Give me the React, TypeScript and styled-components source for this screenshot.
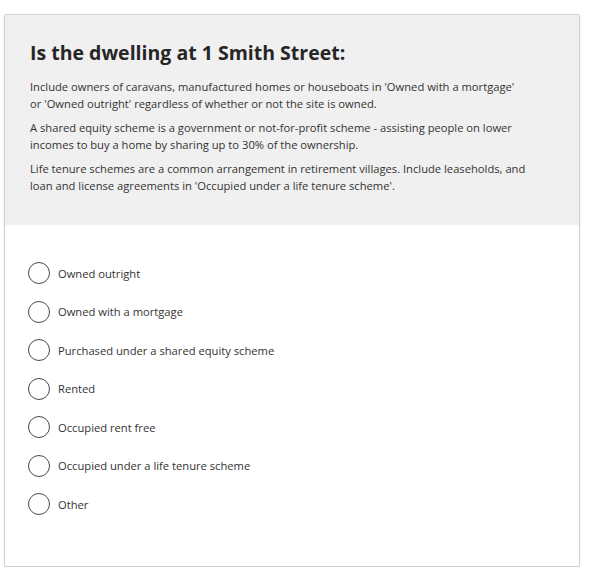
import React from "react";
import styled, { createGlobalStyle } from "styled-components";

const GlobalStyle = createGlobalStyle`
  html, body {
    margin: 0;
    padding: 0;
    background: #ffffff;
  }
  body {
    font-family: "Open Sans", "Noto Sans", sans-serif;
    color: #333333;
  }
`;

const Page = styled.div`
  padding: 14px 0 0 4px;
`;

const Card = styled.div`
  width: 574px;
  height: 551px;
  border: 1px solid #d0d0d0;
  border-radius: 2px;
  box-shadow: 0 1px 2px rgba(0, 0, 0, 0.08);
  background: #ffffff;
  overflow: hidden;
`;

const Header = styled.div`
  background: #f0f0f0;
  height: 210px;
  box-sizing: border-box;
  padding: 24px 53px 0 25px;
`;

const Title = styled.h1`
  margin: 0 0 11px;
  font-size: 19.5px;
  line-height: 28px;
  font-weight: 700;
  color: #262626;
`;

const Hint = styled.p`
  margin: 0 0 6.2px;
  font-size: 11.2px;
  line-height: 17.3px;
  color: #333333;
`;

const Options = styled.div`
  display: flex;
  flex-direction: column;
  padding: 29px 0 0 23px;
`;

const Option = styled.label`
  display: flex;
  align-items: center;
  height: 38.5px;
  gap: 8px;
  cursor: pointer;
`;

const Circle = styled.span`
  width: 20px;
  height: 20px;
  border: 1.5px solid #4a4a4a;
  border-radius: 50%;
  flex-shrink: 0;
`;

const Label = styled.span`
  font-size: 11.2px;
  color: #333333;
`;

const options = [
  "Owned outright",
  "Owned with a mortgage",
  "Purchased under a shared equity scheme",
  "Rented",
  "Occupied rent free",
  "Occupied under a life tenure scheme",
  "Other",
];

const App: React.FC = () => {
  return (
    <>
      <GlobalStyle />
      <Page>
        <Card>
          <Header>
            <Title>Is the dwelling at 1 Smith Street:</Title>
            <Hint>
              Include owners of caravans, manufactured homes or houseboats in
              'Owned with a mortgage' or 'Owned outright' regardless of whether
              or not the site is owned.
            </Hint>
            <Hint>
              A shared equity scheme is a government or not-for-profit scheme -
              assisting people on lower incomes to buy a home by sharing up to
              30% of the ownership.
            </Hint>
            <Hint>
              Life tenure schemes are a common arrangement in retirement
              villages. Include leaseholds, and loan and license agreements in
              'Occupied under a life tenure scheme'.
            </Hint>
          </Header>
          <Options>
            {options.map((name) => (
              <Option key={name}>
                <Circle />
                <Label>{name}</Label>
              </Option>
            ))}
          </Options>
        </Card>
      </Page>
    </>
  );
};

export default App;
